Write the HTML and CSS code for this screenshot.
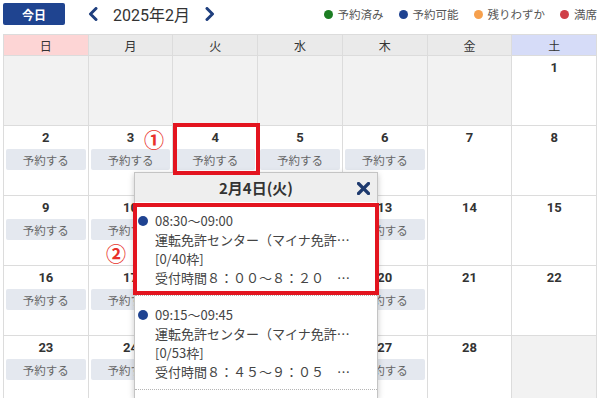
FILE: index.html
```html
<!DOCTYPE html>
<html lang="ja">
<head>
<meta charset="utf-8">
<title>予約カレンダー</title>
<link rel="stylesheet" href="styles.css">
</head>
<body>
<div class="page">
  <header class="toolbar">
    <button class="today">今日</button>
    <div class="month-nav">
      <svg class="chev" viewBox="0 0 10 14" width="10" height="14"><polyline points="8,1.5 2.5,7 8,12.5"/></svg>
      <span class="month">2025年2月</span>
      <svg class="chev" viewBox="0 0 10 14" width="10" height="14"><polyline points="2,1.5 7.5,7 2,12.5"/></svg>
    </div>
    <ul class="legend">
      <li><span class="dot green"></span>予約済み</li>
      <li><span class="dot blue"></span>予約可能</li>
      <li><span class="dot orange"></span>残りわずか</li>
      <li><span class="dot red"></span>満席</li>
    </ul>
  </header>

  <div class="calendar">
    <div class="dow sun">日</div>
    <div class="dow">月</div>
    <div class="dow">火</div>
    <div class="dow">水</div>
    <div class="dow">木</div>
    <div class="dow">金</div>
    <div class="dow sat">土</div>

    <div class="day out"></div>
    <div class="day out"></div>
    <div class="day out"></div>
    <div class="day out"></div>
    <div class="day out"></div>
    <div class="day out"></div>
    <div class="day"><span class="num">1</span></div>

    <div class="day"><span class="num">2</span><button class="book">予約する</button></div>
    <div class="day"><span class="num">3</span><button class="book">予約する</button></div>
    <div class="day"><span class="num">4</span><button class="book">予約する</button></div>
    <div class="day"><span class="num">5</span><button class="book">予約する</button></div>
    <div class="day"><span class="num">6</span><button class="book">予約する</button></div>
    <div class="day"><span class="num">7</span></div>
    <div class="day"><span class="num">8</span></div>

    <div class="day"><span class="num">9</span><button class="book">予約する</button></div>
    <div class="day"><span class="num">10</span><button class="book">予約する</button></div>
    <div class="day"><span class="num">11</span><button class="book">予約する</button></div>
    <div class="day"><span class="num">12</span><button class="book">予約する</button></div>
    <div class="day"><span class="num">13</span><button class="book">予約する</button></div>
    <div class="day"><span class="num">14</span></div>
    <div class="day"><span class="num">15</span></div>

    <div class="day"><span class="num">16</span><button class="book">予約する</button></div>
    <div class="day"><span class="num">17</span><button class="book">予約する</button></div>
    <div class="day"><span class="num">18</span><button class="book">予約する</button></div>
    <div class="day"><span class="num">19</span><button class="book">予約する</button></div>
    <div class="day"><span class="num">20</span><button class="book">予約する</button></div>
    <div class="day"><span class="num">21</span></div>
    <div class="day"><span class="num">22</span></div>

    <div class="day"><span class="num">23</span><button class="book">予約する</button></div>
    <div class="day"><span class="num">24</span><button class="book">予約する</button></div>
    <div class="day"><span class="num">25</span><button class="book">予約する</button></div>
    <div class="day"><span class="num">26</span><button class="book">予約する</button></div>
    <div class="day"><span class="num">27</span><button class="book">予約する</button></div>
    <div class="day"><span class="num">28</span></div>
    <div class="day out"></div>
  </div>

  <div class="popup">
    <div class="popup-head">
      <span class="popup-title">2月4日(火)</span>
      <svg class="close" viewBox="0 0 13 13" width="13" height="13"><line x1="1.5" y1="1.5" x2="11.5" y2="11.5"/><line x1="11.5" y1="1.5" x2="1.5" y2="11.5"/></svg>
    </div>
    <div class="entry">
      <span class="dot blue entry-dot"></span>
      <div class="entry-text">
        <div>08:30〜09:00</div>
        <div>運転免許センター（マイナ免許…</div>
        <div>[0/40枠]</div>
        <div>受付時間８：００〜８：２０　…</div>
      </div>
    </div>
    <div class="entry">
      <span class="dot blue entry-dot"></span>
      <div class="entry-text">
        <div>09:15〜09:45</div>
        <div>運転免許センター（マイナ免許…</div>
        <div>[0/53枠]</div>
        <div>受付時間８：４５〜９：０５　…</div>
      </div>
    </div>
  </div>

  <div class="mark mark-cell"></div>
  <div class="mark mark-entry"></div>
  <span class="step step1">①</span>
  <span class="step step2">②</span>
</div>
</body>
</html>
```

FILE: styles.css
```css
* {
  box-sizing: border-box;
  margin: 0;
  padding: 0;
}

html,
body {
  width: 600px;
  height: 398px;
  overflow: hidden;
  background: #fff;
}

body {
  font-family: Roboto, "Noto Sans CJK JP", sans-serif;
  color: #333;
}

.page {
  position: relative;
  width: 600px;
  height: 398px;
  overflow: hidden;
}

/* toolbar */
.toolbar {
  display: flex;
  align-items: center;
  height: 28px;
  padding: 0 3px;
  margin-bottom: 6px;
}

.today {
  width: 62px;
  height: 22px;
  background: #1f4490;
  color: #fff;
  border: none;
  border-radius: 2px;
  font-family: "Noto Sans CJK JP", sans-serif;
  font-size: 12px;
  font-weight: 700;
}

.month-nav {
  display: flex;
  align-items: center;
  margin-left: 23px;
}

.chev {
  fill: none;
  stroke: #1f3f7e;
  stroke-width: 3;
  stroke-linecap: round;
  stroke-linejoin: round;
}

.month {
  margin: 0 15px;
  font-size: 16px;
  color: #333;
}

.legend {
  list-style: none;
  display: flex;
  margin-left: auto;
  gap: 15px;
  font-family: "Noto Sans CJK JP", sans-serif;
  font-size: 11.5px;
  color: #555;
}

.legend li {
  display: flex;
  align-items: center;
}

.dot {
  display: inline-block;
  width: 9px;
  height: 9px;
  border-radius: 50%;
  margin-right: 5px;
}

.green { background: #1c7d22; }
.blue { background: #1f4391; }
.orange { background: #f6a04d; }
.red { background: #cf3f47; }

/* calendar */
.calendar {
  display: grid;
  grid-template-columns: repeat(7, 1fr);
  grid-template-rows: 21px repeat(5, 70px);
  margin: 0 3px;
  border-top: 1px solid #dcdcdc;
  border-left: 1px solid #dcdcdc;
}

.dow {
  display: flex;
  align-items: center;
  justify-content: center;
  background: #eaeaea;
  border-right: 1px solid #dcdcdc;
  border-bottom: 1px solid #dcdcdc;
  font-family: "Noto Sans CJK JP", sans-serif;
  font-size: 12px;
  color: #333;
}

.dow.sun { background: #fdd5d5; }
.dow.sat { background: #d6dcf8; }

.day {
  display: flex;
  flex-direction: column;
  align-items: stretch;
  padding: 3px 2px 0;
  border-right: 1px solid #dcdcdc;
  border-bottom: 1px solid #dcdcdc;
  background: #fff;
}

.day.out { background: #f2f2f2; }

.num {
  text-align: center;
  font-size: 13px;
  font-weight: 700;
  line-height: 17px;
  color: #333;
}

.book {
  margin-top: 3px;
  height: 21px;
  border: none;
  border-radius: 2px;
  background: #e4e8ef;
  color: #666;
  font-family: "Noto Sans CJK JP", sans-serif;
  font-size: 11.5px;
}

/* popup */
.popup {
  position: absolute;
  left: 134px;
  top: 172px;
  width: 244px;
  height: 226px;
  background: #fff;
  border: 1px solid #c4c4c4;
  border-bottom: none;
  box-shadow: 0 2px 6px rgba(0, 0, 0, 0.22);
  overflow: hidden;
}

.popup-head {
  position: relative;
  display: flex;
  align-items: center;
  justify-content: center;
  height: 29px;
  background: #eeeeee;
}

.popup-title {
  font-family: "Noto Sans CJK JP", sans-serif;
  font-size: 15px;
  font-weight: 700;
  color: #333;
}

.close {
  position: absolute;
  right: 7px;
  top: 9px;
  stroke: #1e3a6e;
  stroke-width: 3.2;
  stroke-linecap: round;
}

.entry {
  display: flex;
  align-items: flex-start;
  padding: 9px 8px 8px 3px;
  border-bottom: 1px dotted #b5b5b5;
}

.entry-dot {
  flex: none;
  width: 10px;
  height: 10px;
  margin: 4.5px 7px 0 0;
}

.entry-text {
  font-family: "Noto Sans CJK JP", sans-serif;
  font-size: 13px;
  line-height: 19px;
  color: #444;
  white-space: nowrap;
}

/* annotations */
.mark {
  position: absolute;
  border: 4px solid #e3141f;
}

.mark-cell {
  left: 173px;
  top: 123px;
  width: 87px;
  height: 52px;
}

.mark-entry {
  left: 133px;
  top: 203px;
  width: 246px;
  height: 92px;
}

.step {
  position: absolute;
  font-family: "Noto Sans CJK JP", sans-serif;
  font-size: 20px;
  font-weight: 700;
  line-height: 20px;
  color: #e8312a;
}

.step1 {
  left: 144px;
  top: 130px;
}

.step2 {
  left: 106px;
  top: 244px;
}
```
